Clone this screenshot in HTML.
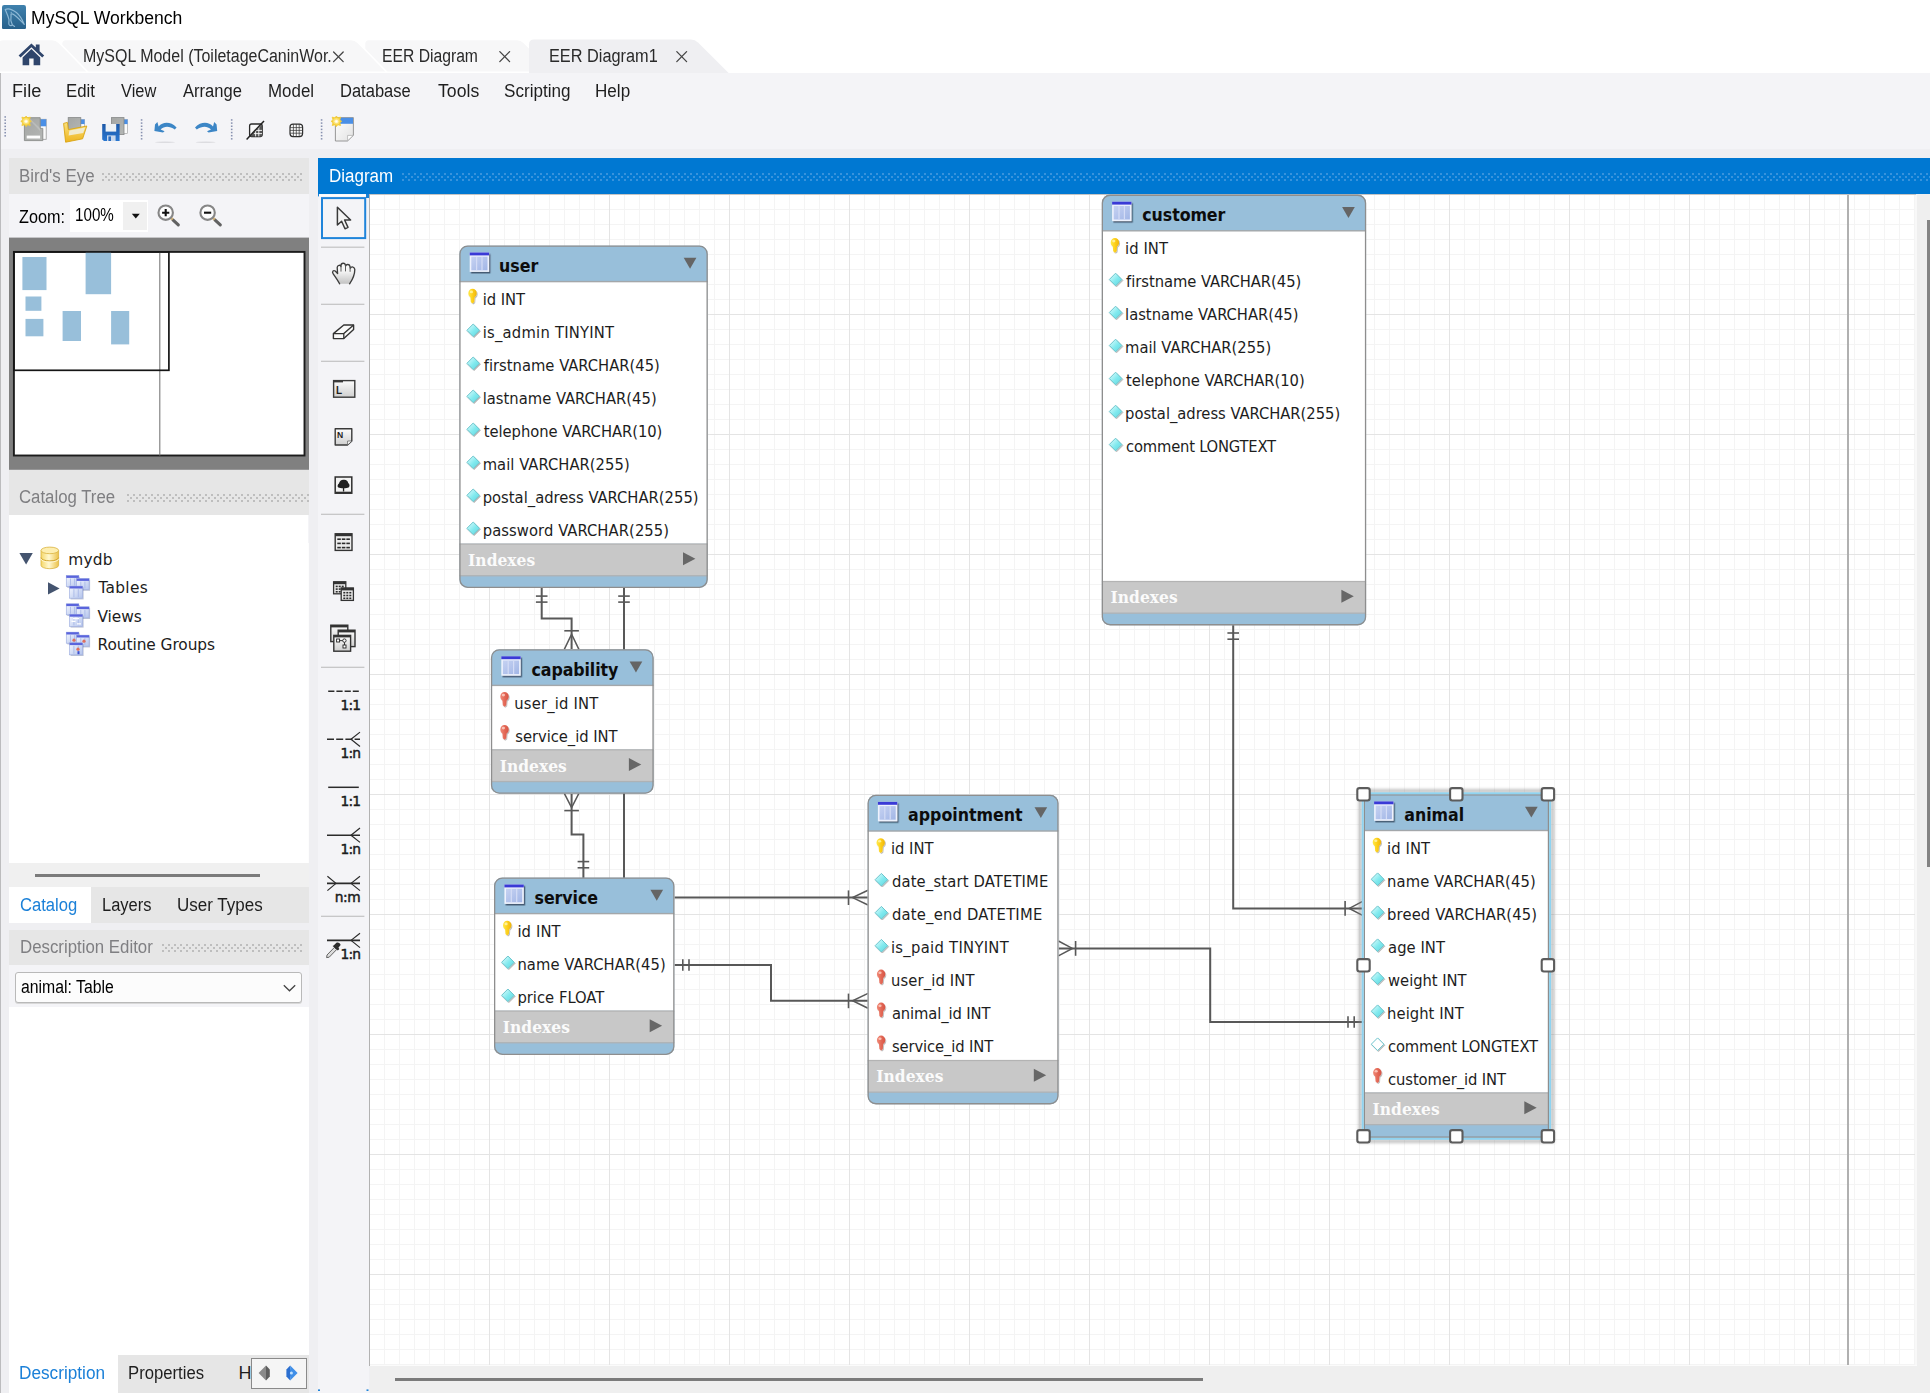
<!DOCTYPE html>
<html lang="en"><head><meta charset="utf-8"><title>MySQL Workbench</title><style>
html,body{margin:0;padding:0;background:#fff;}
body{width:1930px;height:1393px;position:relative;overflow:hidden;font-family:"Liberation Sans",sans-serif;}
body>div{position:absolute;}
.a{position:absolute;display:block;}
.t{position:absolute;white-space:nowrap;display:block;}
text{white-space:pre;}
</style></head>
<body>
<svg class="a" style="left:2px;top:4.5px" width="24" height="24.5" viewBox="0 0 24 24.5">
<defs><linearGradient id="tg" x1="0" y1="0" x2="0" y2="1"><stop offset="0" stop-color="#3f81ad"/><stop offset="1" stop-color="#27608a"/></linearGradient></defs>
<rect x="0" y="0" width="24" height="24.5" rx="2.2" fill="url(#tg)"/>
<path d="M3.2 4.5 C6 3 10.5 4.5 14.4 7.5 C18 10.5 20.5 15 22.3 19.5 C19.5 16.5 16 12.5 12.7 10.2 C11 9 9.8 8.6 9 9 C9.2 12 8.8 14 8.9 15.7 C9.2 17 10 18.6 10.5 20 C9.6 21 7.6 20.8 7 19.5 C6.4 17.5 7.2 16 7 14.6 C6.2 11 4.5 7.5 3.2 4.5 Z M10.5 20 L12.6 21.4" fill="none" stroke="#a5cbe4" stroke-width="1.15" stroke-linejoin="round" stroke-linecap="round" opacity=".8"/>
<circle cx="9.2" cy="7.4" r=".55" fill="#a5cbe4" opacity=".8"/>
</svg>
<span class="t" style="left:31.22px;top:6.80px;font:400 18px/23px 'Liberation Sans',sans-serif;letter-spacing:0.000px;color:#000;transform:scaleX(0.9758);transform-origin:0 0;">MySQL Workbench</span>
<svg class="a" style="left:0;top:38px" width="760" height="36" viewBox="0 38 760 36">
<path d="M364.5 72.3 V44 Q364.5 39.4 369 39.4 H517 Q521 39.4 524 42.4 L553 72.3 Z" fill="#f7f7f8" stroke="#fff" stroke-width="1.5"/>
<path d="M61.5 72.3 V44 Q61.5 39.4 66 39.4 H351 Q355 39.4 358 42.4 L387 72.3 Z" fill="#f7f7f8" stroke="#fff" stroke-width="1.5"/>
<path d="M-2 72.3 V44 Q-2 39.4 4 39.4 H52 Q56 39.4 59 42.4 L88 72.3 Z" fill="#f7f7f8" stroke="#fff" stroke-width="1.5"/>
<path d="M529 74 V44.5 Q529 39.4 534 39.4 H691 Q695 39.4 698 42.4 L729.6 74 Z" fill="#efeff2"/>
<g fill="#2f456b">
<path d="M31.4 43.4 L18.6 55.6 L20.6 57.6 L31.4 47.2 L42.2 57.6 L44.2 55.6 L39.6 51.2 V44.6 H35.8 V47.6 Z"/>
<path d="M31.4 49 L22.6 57.4 V65.2 H29.2 V58.4 H33.6 V65.2 H40.2 V57.4 Z"/>
</g>
<g stroke="#444" stroke-width="1.3" fill="none" stroke-linecap="round">
<path d="M333.6 52 L343.2 61.6 M343.2 52 L333.6 61.6"/>
<path d="M499.8 51.6 L509.6 61.6 M509.6 51.6 L499.8 61.6"/>
<path d="M676.8 51.6 L686.6 61.6 M686.6 51.6 L676.8 61.6"/>
</g>
</svg>
<span class="t" style="left:82.51px;top:45.00px;font:400 18px/23px 'Liberation Sans',sans-serif;letter-spacing:0.000px;color:#2a2a2a;transform:scaleX(0.8881);transform-origin:0 0;">MySQL Model (ToiletageCaninWor.</span>
<span class="t" style="left:382.43px;top:45.00px;font:400 18px/23px 'Liberation Sans',sans-serif;letter-spacing:0.000px;color:#2a2a2a;transform:scaleX(0.8719);transform-origin:0 0;">EER Diagram</span>
<span class="t" style="left:548.59px;top:45.00px;font:400 18px/23px 'Liberation Sans',sans-serif;letter-spacing:0.000px;color:#2a2a2a;transform:scaleX(0.9057);transform-origin:0 0;">EER Diagram1</span>
<div style="left:0px;top:73px;width:1930px;height:76px;background:#f4f4f7;"></div>
<div style="left:0px;top:149px;width:1930px;height:1244px;background:#efeff2;"></div>
<div style="left:0px;top:73px;width:1px;height:1320px;background:#bcbcbe;"></div>
<span class="t" style="left:11.99px;top:79.60px;font:400 18px/23px 'Liberation Sans',sans-serif;letter-spacing:0.000px;color:#1e1e1e;transform:scaleX(1.0110);transform-origin:0 0;">File</span>
<span class="t" style="left:66.27px;top:79.60px;font:400 18px/23px 'Liberation Sans',sans-serif;letter-spacing:0.000px;color:#1e1e1e;transform:scaleX(0.9328);transform-origin:0 0;">Edit</span>
<span class="t" style="left:121.30px;top:79.60px;font:400 18px/23px 'Liberation Sans',sans-serif;letter-spacing:0.000px;color:#1e1e1e;transform:scaleX(0.9121);transform-origin:0 0;">View</span>
<span class="t" style="left:182.60px;top:79.60px;font:400 18px/23px 'Liberation Sans',sans-serif;letter-spacing:0.000px;color:#1e1e1e;transform:scaleX(0.9199);transform-origin:0 0;">Arrange</span>
<span class="t" style="left:267.86px;top:79.60px;font:400 18px/23px 'Liberation Sans',sans-serif;letter-spacing:0.000px;color:#1e1e1e;transform:scaleX(0.9399);transform-origin:0 0;">Model</span>
<span class="t" style="left:340.28px;top:79.60px;font:400 18px/23px 'Liberation Sans',sans-serif;letter-spacing:0.000px;color:#1e1e1e;transform:scaleX(0.9179);transform-origin:0 0;">Database</span>
<span class="t" style="left:438.30px;top:79.60px;font:400 18px/23px 'Liberation Sans',sans-serif;letter-spacing:0.000px;color:#1e1e1e;transform:scaleX(0.9805);transform-origin:0 0;">Tools</span>
<span class="t" style="left:503.80px;top:79.60px;font:400 18px/23px 'Liberation Sans',sans-serif;letter-spacing:0.000px;color:#1e1e1e;transform:scaleX(0.9504);transform-origin:0 0;">Scripting</span>
<span class="t" style="left:594.85px;top:79.60px;font:400 18px/23px 'Liberation Sans',sans-serif;letter-spacing:0.000px;color:#1e1e1e;transform:scaleX(0.9498);transform-origin:0 0;">Help</span>
<svg class="a" style="left:0;top:108px" width="370" height="42" viewBox="0 108 370 42"><defs><linearGradient id="gdoc" x1="0" y1="0" x2="1" y2="1"><stop offset="0" stop-color="#a4a6a4"/><stop offset="1" stop-color="#b4b6b4"/></linearGradient><linearGradient id="gfold" x1="0" y1="0" x2="0" y2="1"><stop offset="0" stop-color="#fbe27f"/><stop offset="1" stop-color="#eeb51e"/></linearGradient><linearGradient id="gpage" x1="0" y1="0" x2="1" y2="1"><stop offset="0" stop-color="#ffffff"/><stop offset="1" stop-color="#e2e2e2"/></linearGradient><linearGradient id="gflop" x1="0" y1="0" x2="0" y2="1"><stop offset="0" stop-color="#1c58a8"/><stop offset="1" stop-color="#2a77d0"/></linearGradient></defs><rect x="4.4" y="116.20" width="1.6" height="1.5" fill="#8791b0"/><rect x="4.4" y="119.35" width="1.6" height="1.5" fill="#8791b0"/><rect x="4.4" y="122.50" width="1.6" height="1.5" fill="#8791b0"/><rect x="4.4" y="125.65" width="1.6" height="1.5" fill="#8791b0"/><rect x="4.4" y="128.80" width="1.6" height="1.5" fill="#8791b0"/><rect x="4.4" y="131.95" width="1.6" height="1.5" fill="#8791b0"/><rect x="4.4" y="135.10" width="1.6" height="1.5" fill="#8791b0"/><rect x="40" y="119.3" width="6.2" height="20" fill="#fbfbfb" stroke="#9a9a9a" stroke-width=".8"/><rect x="40" y="119.3" width="6.2" height="7" fill="#4a8fe6"/><path d="M24.4 117.7 H40.2 V128.4 H42.8 V140.6 H24.4 Z" fill="url(#gdoc)" stroke="#8a8c8a" stroke-width=".9"/><path d="M30 118.4 L40 128 V131 L28 118.4 Z" fill="#fff" opacity=".18"/><rect x="26.7" y="135.6" width="13.4" height="2.9" fill="#fdfdfd"/><polygon points="31.40,121.30 29.53,122.72 30.30,125.50 27.52,124.73 26.10,126.60 24.68,124.73 21.90,125.50 22.67,122.72 20.80,121.30 22.67,119.88 21.90,117.10 24.68,117.87 26.10,116.00 27.52,117.87 30.30,117.10 29.53,119.88" fill="#f6cf35" stroke="#f4cb3a" stroke-width=".8" stroke-linejoin="round"/><circle cx="26.1" cy="121.3" r="3.29" fill="#fbe06e"/><circle cx="26.1" cy="121.3" r="1.91" fill="#fff6c8"/><circle cx="26.1" cy="121.3" r="0.90" fill="#ffffff"/><rect x="80" y="119.5" width="4.6" height="9" fill="#fbfbfb" stroke="#9a9a9a" stroke-width=".6"/><rect x="80" y="119.5" width="4.6" height="4.6" fill="#4a8fe6"/><rect x="68.2" y="117.6" width="12.6" height="14" fill="url(#gdoc)" stroke="#868888" stroke-width=".8"/><path d="M63.6 123.4 L67.4 122.4 L68.4 129.6 L86.8 126 L82.6 138.8 L65.6 142.2 Z" fill="url(#gfold)" stroke="#d9a514" stroke-width=".9" stroke-linejoin="round"/><path d="M69.4 130.6 L85.2 127.4 L83.2 133 L68.6 135.6 Z" fill="#f1eedc" opacity=".9"/><rect x="123" y="119.5" width="4.6" height="14" fill="#fbfbfb" stroke="#9a9a9a" stroke-width=".6"/><rect x="123" y="119.5" width="4.6" height="4.6" fill="#4a8fe6"/><rect x="111.4" y="117.6" width="12.6" height="17" fill="url(#gdoc)" stroke="#868888" stroke-width=".8"/><path d="M102.2 124 H119.6 V141 H104 L102.2 139.4 Z" fill="url(#gflop)"/><rect x="105.6" y="124" width="10.6" height="7.6" fill="#eef2f6"/><rect x="107" y="135.4" width="8.6" height="5.6" fill="#c9d8ec"/><rect x="108.4" y="136.4" width="2.6" height="4.6" fill="#2a6cc0"/><rect x="140.8" y="119.20" width="1.6" height="1.5" fill="#8791b0"/><rect x="140.8" y="122.35" width="1.6" height="1.5" fill="#8791b0"/><rect x="140.8" y="125.50" width="1.6" height="1.5" fill="#8791b0"/><rect x="140.8" y="128.65" width="1.6" height="1.5" fill="#8791b0"/><rect x="140.8" y="131.80" width="1.6" height="1.5" fill="#8791b0"/><rect x="140.8" y="134.95" width="1.6" height="1.5" fill="#8791b0"/><rect x="140.8" y="138.10" width="1.6" height="1.5" fill="#8791b0"/><path d="M155 124.4 L157.4 122 L158.6 126.6 C163 121.6 170.4 121.4 176.6 127.4 L174.8 129.6 C169.6 126 164.4 126 160.6 129.4 L164.6 131.2 L163 132.4 L154.4 131 Z" fill="#3c86c6"/><ellipse cx="165" cy="142.2" rx="10" ry="0.7" fill="#dcdce0"/><path d="M216.6 124.4 L214.2 122 L213 126.6 C208.6 121.6 201.2 121.4 195 127.4 L196.8 129.6 C202 126 207.2 126 211 129.4 L207 131.2 L208.6 132.4 L217.2 131 Z" fill="#3c86c6"/><ellipse cx="205.6" cy="142.2" rx="10" ry="0.7" fill="#dcdce0"/><rect x="230.9" y="119.20" width="1.6" height="1.5" fill="#8791b0"/><rect x="230.9" y="122.35" width="1.6" height="1.5" fill="#8791b0"/><rect x="230.9" y="125.50" width="1.6" height="1.5" fill="#8791b0"/><rect x="230.9" y="128.65" width="1.6" height="1.5" fill="#8791b0"/><rect x="230.9" y="131.80" width="1.6" height="1.5" fill="#8791b0"/><rect x="230.9" y="134.95" width="1.6" height="1.5" fill="#8791b0"/><rect x="230.9" y="138.10" width="1.6" height="1.5" fill="#8791b0"/><rect x="249.6" y="124" width="12.6" height="12.6" rx="2" fill="#fafafa" stroke="#2a2a2a" stroke-width="1.3"/><path d="M262 124.4 L262 136.4 L250 136.4 Z" fill="#555"/><path d="M254 130.4 H262 M254 133.6 H262 M255.6 128 V136.4 M258.8 126 V136.4" stroke="#fafafa" stroke-width=".9"/><path d="M246.6 139.4 L264 121" stroke="#222" stroke-width="1.5"/><rect x="290" y="124.2" width="12.6" height="12.4" rx="3" fill="#fafafa" stroke="#2e2e2e" stroke-width="1.2"/><path d="M290 127.6 H302.6 M290 130.4 H302.6 M290 133.2 H302.6 M293.4 124 V136.6 M296.3 124 V136.6 M299.2 124 V136.6" stroke="#3a3a3a" stroke-width=".75"/><rect x="320.8" y="119.20" width="1.6" height="1.5" fill="#8791b0"/><rect x="320.8" y="122.35" width="1.6" height="1.5" fill="#8791b0"/><rect x="320.8" y="125.50" width="1.6" height="1.5" fill="#8791b0"/><rect x="320.8" y="128.65" width="1.6" height="1.5" fill="#8791b0"/><rect x="320.8" y="131.80" width="1.6" height="1.5" fill="#8791b0"/><rect x="320.8" y="134.95" width="1.6" height="1.5" fill="#8791b0"/><rect x="320.8" y="138.10" width="1.6" height="1.5" fill="#8791b0"/><path d="M335.4 117.6 H353.4 V135.4 L347.4 141 H335.4 Z" fill="url(#gpage)" stroke="#8c8c8c" stroke-width=".9"/><rect x="336" y="117.8" width="17" height="6" fill="#4a8fe6"/><path d="M353.2 135.4 H347.6 V140.8 Z" fill="#fff" stroke="#aaa" stroke-width=".7"/><polygon points="341.70,121.30 339.83,122.72 340.60,125.50 337.82,124.73 336.40,126.60 334.98,124.73 332.20,125.50 332.97,122.72 331.10,121.30 332.97,119.88 332.20,117.10 334.98,117.87 336.40,116.00 337.82,117.87 340.60,117.10 339.83,119.88" fill="#f6cf35" stroke="#f4cb3a" stroke-width=".8" stroke-linejoin="round"/><circle cx="336.4" cy="121.3" r="3.29" fill="#fbe06e"/><circle cx="336.4" cy="121.3" r="1.91" fill="#fff6c8"/><circle cx="336.4" cy="121.3" r="0.90" fill="#ffffff"/></svg>
<div style="left:9px;top:158px;width:300px;height:36px;background:#e6e6e6;"></div>
<span class="t" style="left:19.26px;top:164.90px;font:400 18px/23px 'Liberation Sans',sans-serif;letter-spacing:0.000px;color:#7f7f82;transform:scaleX(0.9389);transform-origin:0 0;">Bird's Eye</span>
<svg class="a" style="left:102px;top:173px" width="200" height="8" viewBox="0 0 200 8" shape-rendering="crispEdges"><defs><pattern id="d1" width="6" height="6" patternUnits="userSpaceOnUse"><rect x="0" y="0" width="2" height="2" fill="#bebebe"/><rect x="3" y="3" width="2" height="2" fill="#bebebe"/></pattern></defs><rect x="0" y="0" width="200" height="8" fill="url(#d1)"/></svg>
<div style="left:9px;top:194px;width:300px;height:44px;background:#f4f4f7;"></div>
<span class="t" style="left:19.00px;top:205.50px;font:400 18px/23px 'Liberation Sans',sans-serif;letter-spacing:0.000px;color:#000;transform:scaleX(0.8998);transform-origin:0 0;">Zoom:</span>
<div style="left:70px;top:200.4px;width:78px;height:31.400000000000006px;background:#fff;"></div>
<div style="left:123px;top:202px;width:24px;height:28px;background:#f0f0f0;"></div>
<span class="t" style="left:75.10px;top:202.30px;font:400 19px/25px 'Liberation Sans',sans-serif;letter-spacing:0.000px;color:#000;transform:scaleX(0.7987);transform-origin:0 0;">100%</span>
<svg class="a" style="left:128px;top:200px" width="100" height="32" viewBox="128 200 100 32">
<path d="M131.8 213.8 H139.8 L135.8 218.6 Z" fill="#111"/>
<g fill="none">
<path d="M172.9 219.8 L178.3 224.9" stroke="#626262" stroke-width="3.1" stroke-linecap="round"/>
<path d="M171 218 L172.7 219.6" stroke="#d6b67a" stroke-width="2.8"/>
<circle cx="165.7" cy="212.7" r="7.2" stroke="#868686" stroke-width="2.1" fill="#fdfdfd"/>
<path d="M162.1 212.7 H169.3 M165.7 209.1 V216.3" stroke="#111" stroke-width="2.1"/>
<path d="M214.9 219.8 L220.3 224.9" stroke="#626262" stroke-width="3.1" stroke-linecap="round"/>
<path d="M213 218 L214.7 219.6" stroke="#d6b67a" stroke-width="2.8"/>
<circle cx="207.6" cy="212.7" r="7.2" stroke="#868686" stroke-width="2.1" fill="#fdfdfd"/>
<path d="M204 212.7 H211.2" stroke="#111" stroke-width="2.1"/>
</g></svg>
<svg class="a" style="left:0;top:236px" width="312" height="236" viewBox="0 236 312 236"><rect x="9" y="237.6" width="300" height="232.2" fill="#808080"/><rect x="13.9" y="251.9" width="290.6" height="203.6" fill="#fff" stroke="#1c1c1c" stroke-width="1.9"/><rect x="22.4" y="257" width="24.1" height="33.1" fill="#98bfda"/><rect x="85.6" y="251.2" width="25.5" height="43.0" fill="#98bfda"/><rect x="25.5" y="296.5" width="15.9" height="14.3" fill="#98bfda"/><rect x="25.5" y="318.9" width="17.9" height="17.4" fill="#98bfda"/><rect x="62.6" y="311" width="18.4" height="30.0" fill="#98bfda"/><rect x="111.1" y="311" width="18.1" height="33.4" fill="#98bfda"/><path d="M159.8 252.5 V455.5" stroke="#7a7a7a" stroke-width="1.1" fill="none"/><rect x="13.9" y="251.9" width="155" height="118.4" fill="none" stroke="#151515" stroke-width="1.7"/></svg>
<div style="left:9px;top:469.8px;width:300px;height:45.19999999999999px;background:#e6e6e6;"></div>
<span class="t" style="left:19.40px;top:485.90px;font:400 18px/23px 'Liberation Sans',sans-serif;letter-spacing:0.000px;color:#7f7f82;transform:scaleX(0.9325);transform-origin:0 0;">Catalog Tree</span>
<svg class="a" style="left:127px;top:494px" width="182" height="8" viewBox="0 0 182 8" shape-rendering="crispEdges"><defs><pattern id="d2" width="6" height="6" patternUnits="userSpaceOnUse"><rect x="0" y="0" width="2" height="2" fill="#bebebe"/><rect x="3" y="3" width="2" height="2" fill="#bebebe"/></pattern></defs><rect x="0" y="0" width="182" height="8" fill="url(#d2)"/></svg>
<div style="left:9px;top:515px;width:298.5px;height:348px;background:#fff;"></div>
<div style="left:307.5px;top:515px;width:1.5px;height:28px;background:#f4f4f7;"></div>
<div style="left:307.5px;top:543px;width:1.5px;height:320px;background:#fdfdfd;"></div>
<svg class="a" style="left:0;top:540px" width="100" height="120" viewBox="0 540 100 120"><defs><linearGradient id="gdb" x1="0" y1="0" x2="1" y2="0"><stop offset="0" stop-color="#f5d86a"/><stop offset=".45" stop-color="#fff8d0"/><stop offset="1" stop-color="#ecc24a"/></linearGradient><linearGradient id="gtb" x1="0" y1="0" x2="1" y2="1"><stop offset="0" stop-color="#f4f7ff"/><stop offset="1" stop-color="#b4c4ec"/></linearGradient></defs><path d="M19.4 553 H32.8 L26.1 564.6 Z" fill="#44546f"/><path d="M48 582.2 L59.6 588.4 L48 594.6 Z" fill="#44546f"/><g stroke="#d9b240" stroke-width=".8"><path d="M41 550.4 V565.4 A8.8 3.3 0 0 0 58.6 565.4 V550.4 Z" fill="url(#gdb)"/><path d="M41 557.6 A8.8 3.3 0 0 0 58.6 557.6" fill="none" stroke="#cfa22a" stroke-width="1"/><path d="M41 558.8 A8.8 3.3 0 0 0 58.6 558.8" fill="none" stroke="#fff8d8" stroke-width=".9"/><ellipse cx="49.8" cy="550.4" rx="8.8" ry="3.3" fill="#fdeeb0"/></g><rect x="67.3" y="576.8000000000001" width="12.5" height="11" fill="#5a6a98" opacity=".4"/><rect x="66.3" y="575.6" width="12.5" height="11" fill="url(#gtb)" stroke="#a3b2e2" stroke-width=".7"/><rect x="66.3" y="575.6" width="12.5" height="2.3" fill="#5a64dc"/><path d="M70.5 578.6 V585.6 M74.6 578.6 V585.6" stroke="#a9b9e8" stroke-width=".9"/><rect x="77.6" y="579.8000000000001" width="12.5" height="11" fill="#5a6a98" opacity=".4"/><rect x="76.6" y="578.6" width="12.5" height="11" fill="url(#gtb)" stroke="#a3b2e2" stroke-width=".7"/><rect x="76.6" y="578.6" width="12.5" height="2.3" fill="#5a64dc"/><path d="M80.8 581.6 V588.6 M84.9 581.6 V588.6" stroke="#a9b9e8" stroke-width=".9"/><rect x="70.6" y="587.4000000000001" width="13" height="12" fill="#5a6a98" opacity=".4"/><rect x="69.6" y="586.2" width="13" height="12" fill="url(#gtb)" stroke="#a3b2e2" stroke-width=".7"/><rect x="69.6" y="586.2" width="13" height="2.3" fill="#5a64dc"/><path d="M73.9 589.2 V597.2 M78.3 589.2 V597.2" stroke="#a9b9e8" stroke-width=".9"/><rect x="67.3" y="605.0" width="12.5" height="11" fill="#5a6a98" opacity=".4"/><rect x="66.3" y="603.8" width="12.5" height="11" fill="url(#gtb)" stroke="#a3b2e2" stroke-width=".7"/><rect x="66.3" y="603.8" width="12.5" height="2.3" fill="#5a64dc"/><path d="M70.5 606.8 V613.8 M74.6 606.8 V613.8" stroke="#a9b9e8" stroke-width=".9"/><rect x="77.6" y="608.0" width="12.5" height="11" fill="#5a6a98" opacity=".4"/><rect x="76.6" y="606.8" width="12.5" height="11" fill="url(#gtb)" stroke="#a3b2e2" stroke-width=".7"/><rect x="76.6" y="606.8" width="12.5" height="2.3" fill="#5a64dc"/><path d="M80.8 609.8 V616.8 M84.9 609.8 V616.8" stroke="#a9b9e8" stroke-width=".9"/><rect x="70.6" y="615.6" width="13" height="12" fill="#5a6a98" opacity=".4"/><rect x="69.6" y="614.4" width="13" height="12" fill="url(#gtb)" stroke="#a3b2e2" stroke-width=".7"/><rect x="69.6" y="614.4" width="13" height="2.3" fill="#5a64dc"/><path d="M73.9 617.4 V625.4 M78.3 617.4 V625.4" stroke="#a9b9e8" stroke-width=".9"/><path d="M71.5 621.3 h4 m1.5 2.5 h4 m-8 -5.2 h6" stroke="#fff" stroke-width="1.2"/><rect x="67.3" y="633.4000000000001" width="12.5" height="11" fill="#5a6a98" opacity=".4"/><rect x="66.3" y="632.2" width="12.5" height="11" fill="url(#gtb)" stroke="#a3b2e2" stroke-width=".7"/><rect x="66.3" y="632.2" width="12.5" height="2.3" fill="#5a64dc"/><path d="M70.5 635.2 V642.2 M74.6 635.2 V642.2" stroke="#a9b9e8" stroke-width=".9"/><rect x="77.6" y="636.4000000000001" width="12.5" height="11" fill="#5a6a98" opacity=".4"/><rect x="76.6" y="635.2" width="12.5" height="11" fill="url(#gtb)" stroke="#a3b2e2" stroke-width=".7"/><rect x="76.6" y="635.2" width="12.5" height="2.3" fill="#5a64dc"/><path d="M80.8 638.2 V645.2 M84.9 638.2 V645.2" stroke="#a9b9e8" stroke-width=".9"/><rect x="70.6" y="644.0000000000001" width="13" height="12" fill="#5a6a98" opacity=".4"/><rect x="69.6" y="642.8000000000001" width="13" height="12" fill="url(#gtb)" stroke="#a3b2e2" stroke-width=".7"/><rect x="69.6" y="642.8000000000001" width="13" height="2.3" fill="#5a64dc"/><path d="M73.9 645.8000000000001 V653.8000000000001 M78.3 645.8000000000001 V653.8000000000001" stroke="#a9b9e8" stroke-width=".9"/><circle cx="74" cy="640.2" r="1.6" fill="#e0705e"/><circle cx="84" cy="641.2" r="1.6" fill="#e0705e"/><circle cx="78" cy="649.2" r="1.6" fill="#e0705e"/><rect x="77.5" y="651.2" width="2" height="3" fill="#3a4fd0"/></svg>
<span class="t" style="left:68.30px;top:549.60px;font:400 15.4px/20px 'DejaVu Sans',sans-serif;letter-spacing:0.177px;color:#1c1c1c;">mydb</span>
<span class="t" style="left:98.40px;top:578.40px;font:400 15.4px/20px 'DejaVu Sans',sans-serif;letter-spacing:0.300px;color:#1c1c1c;">Tables</span>
<span class="t" style="left:97.40px;top:606.80px;font:400 15.4px/20px 'DejaVu Sans',sans-serif;letter-spacing:-0.056px;color:#1c1c1c;">Views</span>
<span class="t" style="left:97.60px;top:635.20px;font:400 15.4px/20px 'DejaVu Sans',sans-serif;letter-spacing:-0.081px;color:#1c1c1c;">Routine Groups</span>
<div style="left:9px;top:863px;width:300px;height:24.399999999999977px;background:#f0f0f0;"></div>
<div style="left:34.5px;top:873.7px;width:225.2px;height:3.199999999999932px;background:#7b7b7b;"></div>
<div style="left:9px;top:887.4px;width:300px;height:35.80000000000007px;background:#e6e6e6;"></div>
<div style="left:9px;top:887.4px;width:82.3px;height:35.80000000000007px;background:#fff;"></div>
<span class="t" style="left:20.40px;top:894.00px;font:400 18px/23px 'Liberation Sans',sans-serif;letter-spacing:0.000px;color:#1b80d8;transform:scaleX(0.9225);transform-origin:0 0;">Catalog</span>
<span class="t" style="left:102.48px;top:894.00px;font:400 18px/23px 'Liberation Sans',sans-serif;letter-spacing:0.000px;color:#1e1e1e;transform:scaleX(0.9165);transform-origin:0 0;">Layers</span>
<span class="t" style="left:177.06px;top:894.00px;font:400 18px/23px 'Liberation Sans',sans-serif;letter-spacing:0.000px;color:#1e1e1e;transform:scaleX(0.9441);transform-origin:0 0;">User Types</span>
<div style="left:9px;top:929.6px;width:300px;height:35.39999999999998px;background:#e6e6e6;"></div>
<span class="t" style="left:19.66px;top:935.90px;font:400 18px/23px 'Liberation Sans',sans-serif;letter-spacing:0.000px;color:#7f7f82;transform:scaleX(0.9350);transform-origin:0 0;">Description Editor</span>
<svg class="a" style="left:162px;top:944px" width="140" height="8" viewBox="0 0 140 8" shape-rendering="crispEdges"><defs><pattern id="d3" width="6" height="6" patternUnits="userSpaceOnUse"><rect x="0" y="0" width="2" height="2" fill="#bebebe"/><rect x="3" y="3" width="2" height="2" fill="#bebebe"/></pattern></defs><rect x="0" y="0" width="140" height="8" fill="url(#d3)"/></svg>
<div style="left:9px;top:965px;width:300px;height:42px;background:#f4f4f7;"></div>
<div style="left:15.1px;top:971.5px;width:287.4px;height:31.200000000000045px;background:#fcfcfc;border:1px solid #b9b9b9;border-radius:3px;box-sizing:border-box;box-shadow:0 1px 0 #d8d8d8"></div>
<span class="t" style="left:21.00px;top:976.40px;font:400 18px/23px 'Liberation Sans',sans-serif;letter-spacing:0.000px;color:#000;transform:scaleX(0.8770);transform-origin:0 0;">animal: Table</span>
<svg class="a" style="left:280px;top:980px" width="20" height="16" viewBox="280 980 20 16"><path d="M283.8 985.2 L289.5 990.8 L295.2 985.2" fill="none" stroke="#444" stroke-width="1.3"/></svg>
<div style="left:9px;top:1007px;width:300px;height:348px;background:#fff;"></div>
<div style="left:9px;top:1355px;width:300px;height:38px;background:#e6e6e6;"></div>
<div style="left:9px;top:1355px;width:109px;height:38px;background:#fff;"></div>
<span class="t" style="left:19.44px;top:1362.40px;font:400 18px/23px 'Liberation Sans',sans-serif;letter-spacing:0.000px;color:#1b80d8;transform:scaleX(0.9554);transform-origin:0 0;">Description</span>
<span class="t" style="left:128.47px;top:1362.40px;font:400 18px/23px 'Liberation Sans',sans-serif;letter-spacing:0.000px;color:#1e1e1e;transform:scaleX(0.9267);transform-origin:0 0;">Properties</span>
<span class="t" style="left:238.60px;top:1362.40px;font:400 18px/23px 'Liberation Sans',sans-serif;letter-spacing:0.000px;color:#1e1e1e;">H</span>
<div style="left:251px;top:1357.6px;width:56px;height:31.800000000000182px;background:#f5f5f5;border:1px solid #8a8a8a;box-sizing:border-box"></div>
<svg class="a" style="left:252px;top:1360px" width="54" height="28" viewBox="252 1360 54 28">
<path d="M258.6 1373 L266 1365.6 V1369.4 L269.6 1373 L266 1376.6 V1380.4 Z" fill="#8a8a8a"/><path d="M266 1365.6 V1380.4 L269.8 1376.6 V1369.4 Z" fill="#5e5e5e"/>
<path d="M297.6 1373 L290.2 1365.6 V1369.4 L286.6 1373 L290.2 1376.6 V1380.4 Z" fill="#3f8fe8"/><path d="M290.2 1365.6 V1380.4 L286.4 1376.6 V1369.4 Z" fill="#2b6fd0"/><circle cx="291.4" cy="1373" r="1.5" fill="#bfe0ff"/>
</svg>
<div style="left:318px;top:158px;width:1612px;height:36px;background:#0078d2;"></div>
<span class="t" style="left:328.66px;top:164.90px;font:400 18px/23px 'Liberation Sans',sans-serif;letter-spacing:0.000px;color:#fff;transform:scaleX(0.9421);transform-origin:0 0;">Diagram</span>
<svg class="a" style="left:402px;top:173px" width="1528" height="8" viewBox="0 0 1528 8" shape-rendering="crispEdges"><defs><pattern id="d4" width="6" height="6" patternUnits="userSpaceOnUse"><rect x="0" y="0" width="2" height="2" fill="#3893dc"/><rect x="3" y="3" width="2" height="2" fill="#3893dc"/></pattern></defs><rect x="0" y="0" width="1528" height="8" fill="url(#d4)"/></svg>
<div style="left:318px;top:194px;width:51px;height:1199px;background:#f4f4f7;"></div>
<div style="left:369px;top:194px;width:1px;height:1172px;background:#b2b2b2;"></div>
<div style="left:370px;top:194px;width:1546px;height:1px;background:#c4c4c4;"></div>
<div style="left:370px;top:195px;width:1545px;height:1171px;background:#fff;background-image:linear-gradient(to right,#e4e4e4 1px,transparent 1px),linear-gradient(to bottom,#e4e4e4 1px,transparent 1px),linear-gradient(to right,#f4f4f4 1px,transparent 1px),linear-gradient(to bottom,#f4f4f4 1px,transparent 1px);background-size:120px 120px,120px 120px,15px 15px,15px 15px;background-position:119px 0,0 119px,14px 0,0 14px;"></div>
<div style="left:1847px;top:195px;width:2px;height:1170px;background:#b0b0b0;"></div>
<div style="left:1915px;top:195px;width:2px;height:1171px;background:#f8f8f8;"></div>
<div style="left:1917px;top:194px;width:13px;height:1172px;background:#efefef;"></div>
<div style="left:1927.3px;top:219.8px;width:2.7000000000000455px;height:647.7px;background:#838383;"></div>
<div style="left:370px;top:1366px;width:1560px;height:27px;background:#efefef;"></div>
<div style="left:370px;top:1365px;width:1547px;height:1px;background:#fbfbfb;"></div>
<div style="left:394.6px;top:1377.7px;width:808.4px;height:3.099999999999909px;background:#7b7b7b;"></div>
<svg class="a" style="left:318px;top:194px" width="52" height="1199" viewBox="318 194 52 1199"><rect x="319" y="194.6" width="47" height="1.6" rx=".8" fill="#fdfdfe"/><rect x="366" y="194" width="3" height="4" fill="#1b80d4"/><rect x="318" y="194" width="1" height="2.4" fill="#1b80d4"/><rect x="322" y="198.1" width="43.2" height="40" fill="#f4f4f7" stroke="#1f84da" stroke-width="2"/><rect x="321" y="246.6" width="43.4" height="1.2" fill="#c2c2c2"/><rect x="321" y="303.7" width="43.4" height="1.2" fill="#c2c2c2"/><rect x="321" y="360.7" width="43.4" height="1.2" fill="#c2c2c2"/><rect x="321" y="513.6999999999999" width="43.4" height="1.2" fill="#c2c2c2"/><rect x="321" y="666.6999999999999" width="43.4" height="1.2" fill="#c2c2c2"/><rect x="321" y="915.6999999999999" width="43.4" height="1.2" fill="#c2c2c2"/><defs><linearGradient id="gic" x1="0" y1="0" x2="0" y2="1"><stop offset="0" stop-color="#fdfdfd"/><stop offset="1" stop-color="#cfcfcf"/></linearGradient><linearGradient id="ghand" x1="0" y1="0" x2="0" y2="1"><stop offset="0" stop-color="#ffffff"/><stop offset=".45" stop-color="#f0f0f0"/><stop offset="1" stop-color="#c2c2c2"/></linearGradient></defs><path d="M337.4 207.2 L337.4 225 L341.6 221.2 L345 228.8 L348 227.4 L344.6 220 L350.6 220 Z" fill="#f4f4f4" stroke="#3a3a3a" stroke-width="1.5" stroke-linejoin="round"/><path d="M339.6 283.8 C338 280.6 336.2 278 333.2 273.8 C331.6 271.8 333.4 269.8 335.2 271 L337.6 273.6 L337.2 267.6 C337.2 264.8 340.6 264.6 341 266.6 L341 265.4 C341.2 262.6 345 262.6 345.4 265.2 L345.6 266.2 C346.2 263.8 349.8 264 350 266.6 L350.4 268.2 C351.4 266 354.8 266.8 354.8 269.6 C354.8 274.6 352.6 279.6 349.6 283.8 Z" fill="url(#ghand)" stroke="none"/><path d="M339.6 283.8 C338 280.6 336.2 278 333.2 273.8 C331.6 271.8 333.4 269.8 335.2 271 L337.6 273.6 L337.2 267.6 C337.2 264.8 340.6 264.6 341 266.6 L341 265.4 C341.2 262.6 345 262.6 345.4 265.2 L345.6 266.2 C346.2 263.8 349.8 264 350 266.6 L350.4 268.2 C351.4 266 354.8 266.8 354.8 269.6 C354.8 274.6 352.6 279.6 349.6 283.8" fill="none" stroke="#3c3c3c" stroke-width="1.35" stroke-linejoin="round" stroke-linecap="round"/><path d="M341 266.8 V271.2 M345.5 265.8 V271 M350.1 267.2 V271.4" stroke="#5a5a5a" stroke-width="1" stroke-linecap="round" fill="none"/><path d="M333.4 333.6 L343.8 325 L353.6 325 L353.6 329.4 L343.8 338.6 L333.4 338.6 Z" fill="#fafafa" stroke="#333" stroke-width="1.4" stroke-linejoin="round"/><path d="M333.4 333.6 H343.8 L353.6 325 M343.8 333.6 V338.6" fill="none" stroke="#333" stroke-width="1.3"/><rect x="333.6" y="380.6" width="21.2" height="16.6" fill="url(#gic)" stroke="#3a3a3a" stroke-width="1.4"/><rect x="333.6" y="380.4" width="9.4" height="2" fill="#3a3a3a"/><text x="336" y="393.9" font-family="'Liberation Sans',sans-serif" font-size="10" font-weight="700" fill="#1e1e1e">L</text><path d="M335.2 428.8 H351.8 V441 L347.4 445 H335.2 Z" fill="url(#gic)" stroke="#3a3a3a" stroke-width="1.4" stroke-linejoin="round"/><path d="M351.6 441 H347.6 V444.8" fill="#fff" stroke="#666" stroke-width=".8"/><text x="337" y="438.3" font-family="'Liberation Sans',sans-serif" font-size="8.6" font-weight="700" fill="#1e1e1e">N</text><rect x="335.2" y="477" width="16.6" height="16.2" fill="#f2f2f2" stroke="#2e2e2e" stroke-width="1.5"/><path d="M343.6 479.8 C346 479.4 348 481 348.2 483 C349.8 484 350 486.6 348.6 487.6 C347 488.6 340 488.6 338.4 487.6 C337 486.6 337.6 484 339 483.4 C339.4 481.4 341.4 479.6 343.6 479.8 Z M342.9 488 H344.2 V491.6 H342.9 Z" fill="#1e1e1e"/><path d="M336 492.4 H351" stroke="#2e2e2e" stroke-width="1.4"/><rect x="335.2" y="533.8" width="16.8" height="16.6" fill="#ededed" stroke="#333" stroke-width="1.4"/><rect x="335.2" y="533.5999999999999" width="16.8" height="2.6" fill="#333"/><rect x="337.30" y="538.40" width="3.53" height="1.6" fill="#2c2c2c"/><rect x="341.83" y="538.40" width="3.53" height="1.6" fill="#2c2c2c"/><rect x="346.37" y="538.40" width="3.53" height="1.6" fill="#2c2c2c"/><rect x="337.30" y="542.60" width="3.53" height="1.6" fill="#2c2c2c"/><rect x="341.83" y="542.60" width="3.53" height="1.6" fill="#2c2c2c"/><rect x="346.37" y="542.60" width="3.53" height="1.6" fill="#2c2c2c"/><rect x="337.30" y="546.80" width="3.53" height="1.6" fill="#2c2c2c"/><rect x="341.83" y="546.80" width="3.53" height="1.6" fill="#2c2c2c"/><rect x="346.37" y="546.80" width="3.53" height="1.6" fill="#2c2c2c"/><rect x="333.6" y="581.8" width="12.2" height="12" fill="#ededed" stroke="#333" stroke-width="1.3"/><rect x="333.6" y="581.5999999999999" width="12.2" height="2.6" fill="#333"/><rect x="335.70" y="585.63" width="2.00" height="1.6" fill="#2c2c2c"/><rect x="338.70" y="585.63" width="2.00" height="1.6" fill="#2c2c2c"/><rect x="341.70" y="585.63" width="2.00" height="1.6" fill="#2c2c2c"/><rect x="335.70" y="588.30" width="2.00" height="1.6" fill="#2c2c2c"/><rect x="338.70" y="588.30" width="2.00" height="1.6" fill="#2c2c2c"/><rect x="341.70" y="588.30" width="2.00" height="1.6" fill="#2c2c2c"/><rect x="335.70" y="590.97" width="2.00" height="1.6" fill="#2c2c2c"/><rect x="338.70" y="590.97" width="2.00" height="1.6" fill="#2c2c2c"/><rect x="341.70" y="590.97" width="2.00" height="1.6" fill="#2c2c2c"/><rect x="341.2" y="588" width="12.2" height="12.4" fill="#ededed" stroke="#333" stroke-width="1.3"/><rect x="341.2" y="587.8" width="12.2" height="2.6" fill="#333"/><rect x="343.30" y="591.90" width="2.00" height="1.6" fill="#2c2c2c"/><rect x="346.30" y="591.90" width="2.00" height="1.6" fill="#2c2c2c"/><rect x="349.30" y="591.90" width="2.00" height="1.6" fill="#2c2c2c"/><rect x="343.30" y="594.70" width="2.00" height="1.6" fill="#2c2c2c"/><rect x="346.30" y="594.70" width="2.00" height="1.6" fill="#2c2c2c"/><rect x="349.30" y="594.70" width="2.00" height="1.6" fill="#2c2c2c"/><rect x="343.30" y="597.50" width="2.00" height="1.6" fill="#2c2c2c"/><rect x="346.30" y="597.50" width="2.00" height="1.6" fill="#2c2c2c"/><rect x="349.30" y="597.50" width="2.00" height="1.6" fill="#2c2c2c"/><rect x="330.8" y="625.2" width="17" height="16.4" fill="url(#gic)" stroke="#333" stroke-width="1.4"/><rect x="330.8" y="625" width="17" height="2.4" fill="#333"/><rect x="338.2" y="630.2" width="16.8" height="16.4" fill="url(#gic)" stroke="#333" stroke-width="1.4"/><rect x="338.2" y="630" width="16.8" height="2.4" fill="#333"/><rect x="333.8" y="635.4" width="16.8" height="15.8" fill="url(#gic)" stroke="#333" stroke-width="1.4"/><rect x="333.8" y="635.2" width="16.8" height="2.2" fill="#333"/><rect x="336.6" y="639" width="3" height="3" fill="#fff" stroke="#222" stroke-width=".9"/><circle cx="344.4" cy="640.6" r="1.7" fill="#fff" stroke="#222" stroke-width=".9"/><rect x="343" y="645" width="3" height="3" fill="#fff" stroke="#222" stroke-width=".9"/><path d="M339.8 640.6 H342.6 M344.5 642.4 V645" stroke="#222" stroke-width=".9"/><path d="M328.2 691.3 H358.8" stroke="#2b2b2b" stroke-width="1.5" stroke-dasharray="6.2 2"/><path d="M327 739.3 H360" stroke="#2b2b2b" stroke-width="1.5" stroke-dasharray="7 2.2"/><path d="M351 739.3 L360 732.0999999999999 M351 739.3 L360 746.5" stroke="#2b2b2b" stroke-width="1.2" fill="none"/><path d="M328.2 787.3 H358.8" stroke="#2b2b2b" stroke-width="1.5"/><path d="M327 835.2 H360" stroke="#2b2b2b" stroke-width="1.6"/><path d="M351 835.2 L360 828.0 M351 835.2 L360 842.4000000000001" stroke="#2b2b2b" stroke-width="1.2" fill="none"/><path d="M327 883.4 H360" stroke="#2b2b2b" stroke-width="1.6"/><path d="M351 883.4 L360 876.1999999999999 M351 883.4 L360 890.6" stroke="#2b2b2b" stroke-width="1.2" fill="none"/><path d="M336 883.4 L327.4 876.2 M336 883.4 L327.4 890.6" stroke="#2b2b2b" stroke-width="1.2" fill="none"/><path d="M327 940.4 H360" stroke="#2b2b2b" stroke-width="1.6"/><path d="M351 940.4 L360 933.1999999999999 M351 940.4 L360 947.6" stroke="#2b2b2b" stroke-width="1.2" fill="none"/><path d="M326.6 957.6 L327 955 L334.4 947.4 L336.6 949.6 L329.2 957.2 Z" fill="#dcdcdc" stroke="#555" stroke-width=".9"/><path d="M333.6 945.4 L336.2 943 C337.6 941.8 340.4 943 340.6 945 L338.4 947.8 L339.4 949 L337.8 950.6 L332.6 946 Z" fill="#2c2c2c"/><text x="340.60" y="710.00" font-family="'DejaVu Sans',sans-serif" font-size="13.8" font-weight="400" fill="#1c1c1c" style="letter-spacing:-0.913px;stroke:#1c1c1c;stroke-width:.45px;">1:1</text><text x="340.60" y="757.60" font-family="'DejaVu Sans',sans-serif" font-size="13.8" font-weight="400" fill="#1c1c1c" style="letter-spacing:-0.913px;stroke:#1c1c1c;stroke-width:.45px;">1:n</text><text x="340.60" y="805.60" font-family="'DejaVu Sans',sans-serif" font-size="13.8" font-weight="400" fill="#1c1c1c" style="letter-spacing:-0.913px;stroke:#1c1c1c;stroke-width:.45px;">1:1</text><text x="340.60" y="853.90" font-family="'DejaVu Sans',sans-serif" font-size="13.8" font-weight="400" fill="#1c1c1c" style="letter-spacing:-0.913px;stroke:#1c1c1c;stroke-width:.45px;">1:n</text><text x="334.80" y="902.00" font-family="'DejaVu Sans',sans-serif" font-size="13.8" font-weight="400" fill="#1c1c1c" style="letter-spacing:-0.496px;stroke:#1c1c1c;stroke-width:.45px;">n:m</text><text x="340.60" y="958.80" font-family="'DejaVu Sans',sans-serif" font-size="13.8" font-weight="400" fill="#1c1c1c" style="letter-spacing:-0.913px;stroke:#1c1c1c;stroke-width:.45px;">1:n</text><rect x="318" y="1389.4" width="2" height="1.6" fill="#1f84da"/><rect x="366.5" y="1389.4" width="2" height="1.6" fill="#1f84da"/></svg>
<svg class="a" style="left:370px;top:194px;overflow:hidden" width="1545" height="1172" viewBox="370 194 1545 1172"><defs>
<linearGradient id="gti" x1="0" y1="0" x2="1" y2="1"><stop offset="0" stop-color="#c6d2f2"/><stop offset="1" stop-color="#a2b6e6"/></linearGradient>
<linearGradient id="gdm" x1="0" y1="0" x2="1" y2="1"><stop offset="0" stop-color="#e9ffff"/><stop offset=".55" stop-color="#7fe9ee"/><stop offset="1" stop-color="#63d4dc"/></linearGradient>
<linearGradient id="gky" x1="0" y1="0" x2="1" y2="0"><stop offset="0" stop-color="#ffe94a"/><stop offset=".5" stop-color="#fdd01c"/><stop offset="1" stop-color="#f0b40c"/></linearGradient>
<linearGradient id="gkr" x1="0" y1="0" x2="1" y2="0"><stop offset="0" stop-color="#f08a78"/><stop offset=".5" stop-color="#e46a58"/><stop offset="1" stop-color="#d65444"/></linearGradient>
<filter id="sh" x="-30%" y="-30%" width="180%" height="180%"><feDropShadow dx="1.3" dy="1.5" stdDeviation=".7" flood-color="#1a2a40" flood-opacity=".7"/></filter>
<filter id="sh2" x="-30%" y="-30%" width="180%" height="180%"><feDropShadow dx=".8" dy="1" stdDeviation=".7" flood-color="#000" flood-opacity=".3"/></filter>
<filter id="glow" x="-10%" y="-10%" width="120%" height="120%"><feGaussianBlur stdDeviation="1.6"/></filter>
</defs><path d="M541.7 588 V618.5 H571.6 V649" fill="none" stroke="#585858" stroke-width="2.0" stroke-linejoin="miter"/><path d="M535.9000000000001 596.1 H547.5" stroke="#585858" stroke-width="1.6"/><path d="M535.9000000000001 602.1 H547.5" stroke="#585858" stroke-width="1.6"/><path d="M564.3 630.8 H578.9" stroke="#585858" stroke-width="1.6"/><path d="M564.3 649.4 L571.6 634.2 L578.9 649.4" fill="none" stroke="#585858" stroke-width="1.5"/><path d="M624 588 V878" fill="none" stroke="#585858" stroke-width="2.0" stroke-linejoin="miter"/><path d="M618.2 596.1 H629.8" stroke="#585858" stroke-width="1.6"/><path d="M618.2 602.1 H629.8" stroke="#585858" stroke-width="1.6"/><path d="M571.6 794 V834.6 H583.4 V878" fill="none" stroke="#585858" stroke-width="2.0" stroke-linejoin="miter"/><path d="M564.3 810.6 H578.9" stroke="#585858" stroke-width="1.6"/><path d="M564.3 793.4 L571.6 807.6 L578.9 793.4" fill="none" stroke="#585858" stroke-width="1.5"/><path d="M577.6 861.6 H589.1999999999999" stroke="#585858" stroke-width="1.6"/><path d="M577.6 867.8 H589.1999999999999" stroke="#585858" stroke-width="1.6"/><path d="M674.5 897.6 H868" fill="none" stroke="#585858" stroke-width="2.0" stroke-linejoin="miter"/><path d="M848.5 890.4 V905" stroke="#585858" stroke-width="1.6"/><path d="M868 890.2 L852.6 897.6 L868 905" fill="none" stroke="#585858" stroke-width="1.5"/><path d="M674.5 965 H771 V1000.8 H868" fill="none" stroke="#585858" stroke-width="2.0" stroke-linejoin="miter"/><path d="M682.8 959.2 V970.8" stroke="#585858" stroke-width="1.6"/><path d="M689 959.2 V970.8" stroke="#585858" stroke-width="1.6"/><path d="M848.5 993.6 V1008.2" stroke="#585858" stroke-width="1.6"/><path d="M868 993.4 L852.6 1000.8 L868 1008.2" fill="none" stroke="#585858" stroke-width="1.5"/><path d="M1058.6 948.4 H1210.2 V1022 H1363.5" fill="none" stroke="#585858" stroke-width="2.0" stroke-linejoin="miter"/><path d="M1075.6 941 V955.8" stroke="#585858" stroke-width="1.6"/><path d="M1058.4 941 L1072.4 948.4 L1058.4 955.8" fill="none" stroke="#585858" stroke-width="1.5"/><path d="M1348 1016.2 V1027.8" stroke="#585858" stroke-width="1.6"/><path d="M1354.2 1016.2 V1027.8" stroke="#585858" stroke-width="1.6"/><path d="M1233.2 625 V908.4 H1363.5" fill="none" stroke="#585858" stroke-width="2.0" stroke-linejoin="miter"/><path d="M1227.4 633 H1239.0" stroke="#585858" stroke-width="1.6"/><path d="M1227.4 639.2 H1239.0" stroke="#585858" stroke-width="1.6"/><path d="M1345.1 901 V915.8" stroke="#585858" stroke-width="1.6"/><path d="M1362.6 901.4 L1349.2 908.4 L1362.6 915.4" fill="none" stroke="#585858" stroke-width="1.5"/><clipPath id="cuser"><rect x="459.3" y="245.4" width="248.49999999999994" height="342.6" rx="8.5"/></clipPath><g clip-path="url(#cuser)"><rect x="459.3" y="245.4" width="248.49999999999994" height="342.6" fill="#98bfda"/><rect x="459.3" y="281.7" width="248.49999999999994" height="262" fill="#fff"/><rect x="459.3" y="543.7" width="248.49999999999994" height="32" fill="#c8c8c8"/><rect x="459.3" y="280.9" width="248.49999999999994" height="1.4" fill="#a3a7aa"/><rect x="459.3" y="543.5" width="248.49999999999994" height="1.2" fill="#b3b3b3"/><rect x="459.3" y="575.1" width="248.49999999999994" height="1.3" fill="#aeb2b5"/></g><rect x="459.95" y="246.05" width="247.19999999999993" height="341.3" rx="7.85" fill="none" stroke="#8e8e8e" stroke-width="1.3"/><g filter="url(#sh)"><rect x="469.7" y="252.5" width="19.4" height="19.4" fill="#eef2fd"/></g><rect x="471.3" y="256.7" width="16.2" height="13.6" fill="url(#gti)"/><rect x="469.7" y="252.5" width="19.4" height="2.9" fill="#3a3ad6"/><path d="M476.6 256.9 V270.1 M482.0 256.9 V270.1" stroke="#d4dcf6" stroke-width="1.2"/><text x="498.90" y="271.80" font-family="'DejaVu Sans Condensed','DejaVu Sans',sans-serif" font-size="17.6" font-weight="700" fill="#0c0c0c" style="letter-spacing:0.056px;font-stretch:condensed;">user</text><path d="M683.7 257.8 H696.4 L690.05 268.7 Z" fill="#656565"/><g filter="url(#sh2)"><path d="M468.30 293.20 a4.2 4.4 0 1 1 8.4 0 c0 1.9 -0.9 3.2 -2.1 4 l-0.4 4.9 l-1.7 1.5 l-1.7 -1.5 l-0.4 -4.9 c-1.2 -0.8 -2.1 -2.1 -2.1 -4 Z" fill="url(#gky)"/><ellipse cx="471.40" cy="291.90" rx="1.6" ry="1.3" fill="#fff6b0" opacity=".8"/></g><text x="482.70" y="305.00" font-family="'DejaVu Sans Condensed','DejaVu Sans',sans-serif" font-size="16.4" font-weight="400" fill="#1d1d1d" style="letter-spacing:-0.024px;font-stretch:condensed;">id INT</text><g filter="url(#sh2)"><path d="M466.90 330.30 L473.20 324.00 L479.50 330.30 L473.20 336.60 Z" fill="url(#gdm)" stroke="#6cc4cc" stroke-width="1"/></g><text x="482.70" y="338.00" font-family="'DejaVu Sans Condensed','DejaVu Sans',sans-serif" font-size="16.4" font-weight="400" fill="#1d1d1d" style="letter-spacing:0.240px;font-stretch:condensed;">is_admin TINYINT</text><g filter="url(#sh2)"><path d="M466.90 363.30 L473.20 357.00 L479.50 363.30 L473.20 369.60 Z" fill="url(#gdm)" stroke="#6cc4cc" stroke-width="1"/></g><text x="483.70" y="371.00" font-family="'DejaVu Sans Condensed','DejaVu Sans',sans-serif" font-size="16.4" font-weight="400" fill="#1d1d1d" style="letter-spacing:0.015px;font-stretch:condensed;">firstname VARCHAR(45)</text><g filter="url(#sh2)"><path d="M466.90 396.30 L473.20 390.00 L479.50 396.30 L473.20 402.60 Z" fill="url(#gdm)" stroke="#6cc4cc" stroke-width="1"/></g><text x="482.70" y="404.00" font-family="'DejaVu Sans Condensed','DejaVu Sans',sans-serif" font-size="16.4" font-weight="400" fill="#1d1d1d" style="letter-spacing:0.017px;font-stretch:condensed;">lastname VARCHAR(45)</text><g filter="url(#sh2)"><path d="M466.90 429.30 L473.20 423.00 L479.50 429.30 L473.20 435.60 Z" fill="url(#gdm)" stroke="#6cc4cc" stroke-width="1"/></g><text x="483.70" y="437.00" font-family="'DejaVu Sans Condensed','DejaVu Sans',sans-serif" font-size="16.4" font-weight="400" fill="#1d1d1d" style="letter-spacing:-0.037px;font-stretch:condensed;">telephone VARCHAR(10)</text><g filter="url(#sh2)"><path d="M466.90 462.30 L473.20 456.00 L479.50 462.30 L473.20 468.60 Z" fill="url(#gdm)" stroke="#6cc4cc" stroke-width="1"/></g><text x="482.70" y="470.00" font-family="'DejaVu Sans Condensed','DejaVu Sans',sans-serif" font-size="16.4" font-weight="400" fill="#1d1d1d" style="letter-spacing:0.048px;font-stretch:condensed;">mail VARCHAR(255)</text><g filter="url(#sh2)"><path d="M466.90 495.30 L473.20 489.00 L479.50 495.30 L473.20 501.60 Z" fill="url(#gdm)" stroke="#6cc4cc" stroke-width="1"/></g><text x="482.70" y="503.00" font-family="'DejaVu Sans Condensed','DejaVu Sans',sans-serif" font-size="16.4" font-weight="400" fill="#1d1d1d" style="letter-spacing:0.015px;font-stretch:condensed;">postal_adress VARCHAR(255)</text><g filter="url(#sh2)"><path d="M466.90 528.30 L473.20 522.00 L479.50 528.30 L473.20 534.60 Z" fill="url(#gdm)" stroke="#6cc4cc" stroke-width="1"/></g><text x="482.70" y="536.00" font-family="'DejaVu Sans Condensed','DejaVu Sans',sans-serif" font-size="16.4" font-weight="400" fill="#1d1d1d" style="letter-spacing:0.089px;font-stretch:condensed;">password VARCHAR(255)</text><text x="468.10" y="565.90" font-family="'DejaVu Serif Condensed','DejaVu Serif',serif" font-size="17.2" font-weight="700" fill="#fbfbfb" style="letter-spacing:0.037px;font-stretch:condensed;">Indexes</text><path d="M683.0 552.3000000000001 L695.4 558.8000000000001 L683.0 565.3000000000001 Z" fill="#676767"/><clipPath id="ccustomer"><rect x="1101.7" y="194.6" width="264.5" height="430.79999999999984" rx="8.5"/></clipPath><g clip-path="url(#ccustomer)"><rect x="1101.7" y="194.6" width="264.5" height="430.79999999999984" fill="#98bfda"/><rect x="1101.7" y="230.89999999999998" width="264.5" height="350.2" fill="#fff"/><rect x="1101.7" y="581.0999999999999" width="264.5" height="32" fill="#c8c8c8"/><rect x="1101.7" y="230.09999999999997" width="264.5" height="1.4" fill="#a3a7aa"/><rect x="1101.7" y="580.8999999999999" width="264.5" height="1.2" fill="#b3b3b3"/><rect x="1101.7" y="612.4999999999999" width="264.5" height="1.3" fill="#aeb2b5"/></g><rect x="1102.3500000000001" y="195.25" width="263.2" height="429.49999999999983" rx="7.85" fill="none" stroke="#8e8e8e" stroke-width="1.3"/><g filter="url(#sh)"><rect x="1112.1000000000001" y="201.7" width="19.4" height="19.4" fill="#eef2fd"/></g><rect x="1113.7" y="205.89999999999998" width="16.2" height="13.6" fill="url(#gti)"/><rect x="1112.1000000000001" y="201.7" width="19.4" height="2.9" fill="#3a3ad6"/><path d="M1119.0 206.1 V219.29999999999998 M1124.4 206.1 V219.29999999999998" stroke="#d4dcf6" stroke-width="1.2"/><text x="1142.30" y="221.00" font-family="'DejaVu Sans Condensed','DejaVu Sans',sans-serif" font-size="17.6" font-weight="700" fill="#0c0c0c" style="letter-spacing:-0.079px;font-stretch:condensed;">customer</text><path d="M1342.1 207.0 H1354.8 L1348.45 217.9 Z" fill="#656565"/><g filter="url(#sh2)"><path d="M1110.70 242.40 a4.2 4.4 0 1 1 8.4 0 c0 1.9 -0.9 3.2 -2.1 4 l-0.4 4.9 l-1.7 1.5 l-1.7 -1.5 l-0.4 -4.9 c-1.2 -0.8 -2.1 -2.1 -2.1 -4 Z" fill="url(#gky)"/><ellipse cx="1113.80" cy="241.10" rx="1.6" ry="1.3" fill="#fff6b0" opacity=".8"/></g><text x="1125.10" y="254.20" font-family="'DejaVu Sans Condensed','DejaVu Sans',sans-serif" font-size="16.4" font-weight="400" fill="#1d1d1d" style="letter-spacing:0.056px;font-stretch:condensed;">id INT</text><g filter="url(#sh2)"><path d="M1109.30 279.50 L1115.60 273.20 L1121.90 279.50 L1115.60 285.80 Z" fill="url(#gdm)" stroke="#6cc4cc" stroke-width="1"/></g><text x="1126.10" y="287.20" font-family="'DejaVu Sans Condensed','DejaVu Sans',sans-serif" font-size="16.4" font-weight="400" fill="#1d1d1d" style="letter-spacing:-0.035px;font-stretch:condensed;">firstname VARCHAR(45)</text><g filter="url(#sh2)"><path d="M1109.30 312.50 L1115.60 306.20 L1121.90 312.50 L1115.60 318.80 Z" fill="url(#gdm)" stroke="#6cc4cc" stroke-width="1"/></g><text x="1125.10" y="320.20" font-family="'DejaVu Sans Condensed','DejaVu Sans',sans-serif" font-size="16.4" font-weight="400" fill="#1d1d1d" style="letter-spacing:-0.015px;font-stretch:condensed;">lastname VARCHAR(45)</text><g filter="url(#sh2)"><path d="M1109.30 345.50 L1115.60 339.20 L1121.90 345.50 L1115.60 351.80 Z" fill="url(#gdm)" stroke="#6cc4cc" stroke-width="1"/></g><text x="1125.10" y="353.20" font-family="'DejaVu Sans Condensed','DejaVu Sans',sans-serif" font-size="16.4" font-weight="400" fill="#1d1d1d" style="letter-spacing:-0.002px;font-stretch:condensed;">mail VARCHAR(255)</text><g filter="url(#sh2)"><path d="M1109.30 378.50 L1115.60 372.20 L1121.90 378.50 L1115.60 384.80 Z" fill="url(#gdm)" stroke="#6cc4cc" stroke-width="1"/></g><text x="1126.10" y="386.20" font-family="'DejaVu Sans Condensed','DejaVu Sans',sans-serif" font-size="16.4" font-weight="400" fill="#1d1d1d" style="letter-spacing:-0.042px;font-stretch:condensed;">telephone VARCHAR(10)</text><g filter="url(#sh2)"><path d="M1109.30 411.50 L1115.60 405.20 L1121.90 411.50 L1115.60 417.80 Z" fill="url(#gdm)" stroke="#6cc4cc" stroke-width="1"/></g><text x="1125.10" y="419.20" font-family="'DejaVu Sans Condensed','DejaVu Sans',sans-serif" font-size="16.4" font-weight="400" fill="#1d1d1d" style="letter-spacing:-0.017px;font-stretch:condensed;">postal_adress VARCHAR(255)</text><g filter="url(#sh2)"><path d="M1109.30 444.50 L1115.60 438.20 L1121.90 444.50 L1115.60 450.80 Z" fill="url(#gdm)" stroke="#6cc4cc" stroke-width="1"/></g><text x="1126.10" y="452.20" font-family="'DejaVu Sans Condensed','DejaVu Sans',sans-serif" font-size="16.4" font-weight="400" fill="#1d1d1d" style="letter-spacing:-0.205px;font-stretch:condensed;">comment LONGTEXT</text><text x="1110.50" y="603.30" font-family="'DejaVu Serif Condensed','DejaVu Serif',serif" font-size="17.2" font-weight="700" fill="#fbfbfb" style="letter-spacing:0.037px;font-stretch:condensed;">Indexes</text><path d="M1341.4 589.6999999999999 L1353.8 596.1999999999999 L1341.4 602.6999999999999 Z" fill="#676767"/><clipPath id="ccapability"><rect x="490.9" y="649.2" width="162.80000000000007" height="144.5999999999999" rx="8.5"/></clipPath><g clip-path="url(#ccapability)"><rect x="490.9" y="649.2" width="162.80000000000007" height="144.5999999999999" fill="#98bfda"/><rect x="490.9" y="685.5" width="162.80000000000007" height="64" fill="#fff"/><rect x="490.9" y="749.5" width="162.80000000000007" height="32" fill="#c8c8c8"/><rect x="490.9" y="684.7" width="162.80000000000007" height="1.4" fill="#a3a7aa"/><rect x="490.9" y="749.3" width="162.80000000000007" height="1.2" fill="#b3b3b3"/><rect x="490.9" y="780.9" width="162.80000000000007" height="1.3" fill="#aeb2b5"/></g><rect x="491.54999999999995" y="649.85" width="161.50000000000006" height="143.2999999999999" rx="7.85" fill="none" stroke="#8e8e8e" stroke-width="1.3"/><g filter="url(#sh)"><rect x="501.29999999999995" y="656.3000000000001" width="19.4" height="19.4" fill="#eef2fd"/></g><rect x="502.9" y="660.5000000000001" width="16.2" height="13.6" fill="url(#gti)"/><rect x="501.29999999999995" y="656.3000000000001" width="19.4" height="2.9" fill="#3a3ad6"/><path d="M508.2 660.7 V673.9000000000001 M513.6 660.7 V673.9000000000001" stroke="#d4dcf6" stroke-width="1.2"/><text x="531.50" y="675.60" font-family="'DejaVu Sans Condensed','DejaVu Sans',sans-serif" font-size="17.6" font-weight="700" fill="#0c0c0c" style="letter-spacing:-0.081px;font-stretch:condensed;">capability</text><path d="M629.6 661.6 H642.3 L635.95 672.5 Z" fill="#656565"/><g filter="url(#sh2)"><path d="M500.30 696.40 a4.2 4.4 0 1 1 8.4 0 c0 1.9 -0.9 3.2 -2.1 4 l-0.4 4.9 l-1.7 1.5 l-1.7 -1.5 l-0.4 -4.9 c-1.2 -0.8 -2.1 -2.1 -2.1 -4 Z" fill="url(#gkr)"/><ellipse cx="503.40" cy="695.10" rx="1.6" ry="1.3" fill="#ffd6cc" opacity=".8"/></g><text x="514.30" y="708.80" font-family="'DejaVu Sans Condensed','DejaVu Sans',sans-serif" font-size="16.4" font-weight="400" fill="#1d1d1d" style="letter-spacing:0.185px;font-stretch:condensed;">user_id INT</text><g filter="url(#sh2)"><path d="M500.30 729.40 a4.2 4.4 0 1 1 8.4 0 c0 1.9 -0.9 3.2 -2.1 4 l-0.4 4.9 l-1.7 1.5 l-1.7 -1.5 l-0.4 -4.9 c-1.2 -0.8 -2.1 -2.1 -2.1 -4 Z" fill="url(#gkr)"/><ellipse cx="503.40" cy="728.10" rx="1.6" ry="1.3" fill="#ffd6cc" opacity=".8"/></g><text x="515.30" y="741.80" font-family="'DejaVu Sans Condensed','DejaVu Sans',sans-serif" font-size="16.4" font-weight="400" fill="#1d1d1d" style="letter-spacing:-0.039px;font-stretch:condensed;">service_id INT</text><text x="499.70" y="771.70" font-family="'DejaVu Serif Condensed','DejaVu Serif',serif" font-size="17.2" font-weight="700" fill="#fbfbfb" style="letter-spacing:0.037px;font-stretch:condensed;">Indexes</text><path d="M628.9 758.1 L641.3 764.6 L628.9 771.1 Z" fill="#676767"/><clipPath id="cservice"><rect x="494" y="877.4" width="180.5" height="177.5999999999998" rx="8.5"/></clipPath><g clip-path="url(#cservice)"><rect x="494" y="877.4" width="180.5" height="177.5999999999998" fill="#98bfda"/><rect x="494" y="913.6999999999999" width="180.5" height="97" fill="#fff"/><rect x="494" y="1010.6999999999999" width="180.5" height="32" fill="#c8c8c8"/><rect x="494" y="912.9" width="180.5" height="1.4" fill="#a3a7aa"/><rect x="494" y="1010.4999999999999" width="180.5" height="1.2" fill="#b3b3b3"/><rect x="494" y="1042.1" width="180.5" height="1.3" fill="#aeb2b5"/></g><rect x="494.65" y="878.05" width="179.2" height="176.29999999999978" rx="7.85" fill="none" stroke="#8e8e8e" stroke-width="1.3"/><g filter="url(#sh)"><rect x="504.4" y="884.5" width="19.4" height="19.4" fill="#eef2fd"/></g><rect x="506.0" y="888.7" width="16.2" height="13.6" fill="url(#gti)"/><rect x="504.4" y="884.5" width="19.4" height="2.9" fill="#3a3ad6"/><path d="M511.3 888.9 V902.1 M516.7 888.9 V902.1" stroke="#d4dcf6" stroke-width="1.2"/><text x="534.60" y="903.80" font-family="'DejaVu Sans Condensed','DejaVu Sans',sans-serif" font-size="17.6" font-weight="700" fill="#0c0c0c" style="letter-spacing:-0.082px;font-stretch:condensed;">service</text><path d="M650.4 889.8 H663.1 L656.75 900.6999999999999 Z" fill="#656565"/><g filter="url(#sh2)"><path d="M503.00 925.20 a4.2 4.4 0 1 1 8.4 0 c0 1.9 -0.9 3.2 -2.1 4 l-0.4 4.9 l-1.7 1.5 l-1.7 -1.5 l-0.4 -4.9 c-1.2 -0.8 -2.1 -2.1 -2.1 -4 Z" fill="url(#gky)"/><ellipse cx="506.10" cy="923.90" rx="1.6" ry="1.3" fill="#fff6b0" opacity=".8"/></g><text x="517.40" y="937.00" font-family="'DejaVu Sans Condensed','DejaVu Sans',sans-serif" font-size="16.4" font-weight="400" fill="#1d1d1d" style="letter-spacing:0.136px;font-stretch:condensed;">id INT</text><g filter="url(#sh2)"><path d="M501.60 962.30 L507.90 956.00 L514.20 962.30 L507.90 968.60 Z" fill="url(#gdm)" stroke="#6cc4cc" stroke-width="1"/></g><text x="517.40" y="970.00" font-family="'DejaVu Sans Condensed','DejaVu Sans',sans-serif" font-size="16.4" font-weight="400" fill="#1d1d1d" style="letter-spacing:0.087px;font-stretch:condensed;">name VARCHAR(45)</text><g filter="url(#sh2)"><path d="M501.60 995.30 L507.90 989.00 L514.20 995.30 L507.90 1001.60 Z" fill="url(#gdm)" stroke="#6cc4cc" stroke-width="1"/></g><text x="517.40" y="1003.00" font-family="'DejaVu Sans Condensed','DejaVu Sans',sans-serif" font-size="16.4" font-weight="400" fill="#1d1d1d" style="letter-spacing:0.018px;font-stretch:condensed;">price FLOAT</text><text x="502.80" y="1032.90" font-family="'DejaVu Serif Condensed','DejaVu Serif',serif" font-size="17.2" font-weight="700" fill="#fbfbfb" style="letter-spacing:0.037px;font-stretch:condensed;">Indexes</text><path d="M649.7 1019.3 L662.1 1025.8 L649.7 1032.3 Z" fill="#676767"/><clipPath id="cappointment"><rect x="867.5" y="794.8" width="191.0999999999999" height="309.5999999999999" rx="8.5"/></clipPath><g clip-path="url(#cappointment)"><rect x="867.5" y="794.8" width="191.0999999999999" height="309.5999999999999" fill="#98bfda"/><rect x="867.5" y="831.0999999999999" width="191.0999999999999" height="229" fill="#fff"/><rect x="867.5" y="1060.1" width="191.0999999999999" height="32" fill="#c8c8c8"/><rect x="867.5" y="830.3" width="191.0999999999999" height="1.4" fill="#a3a7aa"/><rect x="867.5" y="1059.8999999999999" width="191.0999999999999" height="1.2" fill="#b3b3b3"/><rect x="867.5" y="1091.5" width="191.0999999999999" height="1.3" fill="#aeb2b5"/></g><rect x="868.15" y="795.4499999999999" width="189.7999999999999" height="308.2999999999999" rx="7.85" fill="none" stroke="#8e8e8e" stroke-width="1.3"/><g filter="url(#sh)"><rect x="877.9" y="801.9" width="19.4" height="19.4" fill="#eef2fd"/></g><rect x="879.5" y="806.1" width="16.2" height="13.6" fill="url(#gti)"/><rect x="877.9" y="801.9" width="19.4" height="2.9" fill="#3a3ad6"/><path d="M884.8 806.3 V819.5 M890.2 806.3 V819.5" stroke="#d4dcf6" stroke-width="1.2"/><text x="908.10" y="821.20" font-family="'DejaVu Sans Condensed','DejaVu Sans',sans-serif" font-size="17.6" font-weight="700" fill="#0c0c0c" style="letter-spacing:-0.008px;font-stretch:condensed;">appointment</text><path d="M1034.5 807.1999999999999 H1047.2 L1040.85 818.0999999999999 Z" fill="#656565"/><g filter="url(#sh2)"><path d="M876.50 842.60 a4.2 4.4 0 1 1 8.4 0 c0 1.9 -0.9 3.2 -2.1 4 l-0.4 4.9 l-1.7 1.5 l-1.7 -1.5 l-0.4 -4.9 c-1.2 -0.8 -2.1 -2.1 -2.1 -4 Z" fill="url(#gky)"/><ellipse cx="879.60" cy="841.30" rx="1.6" ry="1.3" fill="#fff6b0" opacity=".8"/></g><text x="890.90" y="854.40" font-family="'DejaVu Sans Condensed','DejaVu Sans',sans-serif" font-size="16.4" font-weight="400" fill="#1d1d1d" style="letter-spacing:0.016px;font-stretch:condensed;">id INT</text><g filter="url(#sh2)"><path d="M875.10 879.70 L881.40 873.40 L887.70 879.70 L881.40 886.00 Z" fill="url(#gdm)" stroke="#6cc4cc" stroke-width="1"/></g><text x="891.90" y="887.40" font-family="'DejaVu Sans Condensed','DejaVu Sans',sans-serif" font-size="16.4" font-weight="400" fill="#1d1d1d" style="letter-spacing:0.177px;font-stretch:condensed;">date_start DATETIME</text><g filter="url(#sh2)"><path d="M875.10 912.70 L881.40 906.40 L887.70 912.70 L881.40 919.00 Z" fill="url(#gdm)" stroke="#6cc4cc" stroke-width="1"/></g><text x="891.90" y="920.40" font-family="'DejaVu Sans Condensed','DejaVu Sans',sans-serif" font-size="16.4" font-weight="400" fill="#1d1d1d" style="letter-spacing:0.227px;font-stretch:condensed;">date_end DATETIME</text><g filter="url(#sh2)"><path d="M875.10 945.70 L881.40 939.40 L887.70 945.70 L881.40 952.00 Z" fill="url(#gdm)" stroke="#6cc4cc" stroke-width="1"/></g><text x="890.90" y="953.40" font-family="'DejaVu Sans Condensed','DejaVu Sans',sans-serif" font-size="16.4" font-weight="400" fill="#1d1d1d" style="letter-spacing:0.311px;font-stretch:condensed;">is_paid TINYINT</text><g filter="url(#sh2)"><path d="M876.90 974.00 a4.2 4.4 0 1 1 8.4 0 c0 1.9 -0.9 3.2 -2.1 4 l-0.4 4.9 l-1.7 1.5 l-1.7 -1.5 l-0.4 -4.9 c-1.2 -0.8 -2.1 -2.1 -2.1 -4 Z" fill="url(#gkr)"/><ellipse cx="880.00" cy="972.70" rx="1.6" ry="1.3" fill="#ffd6cc" opacity=".8"/></g><text x="890.90" y="986.40" font-family="'DejaVu Sans Condensed','DejaVu Sans',sans-serif" font-size="16.4" font-weight="400" fill="#1d1d1d" style="letter-spacing:0.155px;font-stretch:condensed;">user_id INT</text><g filter="url(#sh2)"><path d="M876.90 1007.00 a4.2 4.4 0 1 1 8.4 0 c0 1.9 -0.9 3.2 -2.1 4 l-0.4 4.9 l-1.7 1.5 l-1.7 -1.5 l-0.4 -4.9 c-1.2 -0.8 -2.1 -2.1 -2.1 -4 Z" fill="url(#gkr)"/><ellipse cx="880.00" cy="1005.70" rx="1.6" ry="1.3" fill="#ffd6cc" opacity=".8"/></g><text x="891.90" y="1019.40" font-family="'DejaVu Sans Condensed','DejaVu Sans',sans-serif" font-size="16.4" font-weight="400" fill="#1d1d1d" style="letter-spacing:-0.114px;font-stretch:condensed;">animal_id INT</text><g filter="url(#sh2)"><path d="M876.90 1040.00 a4.2 4.4 0 1 1 8.4 0 c0 1.9 -0.9 3.2 -2.1 4 l-0.4 4.9 l-1.7 1.5 l-1.7 -1.5 l-0.4 -4.9 c-1.2 -0.8 -2.1 -2.1 -2.1 -4 Z" fill="url(#gkr)"/><ellipse cx="880.00" cy="1038.70" rx="1.6" ry="1.3" fill="#ffd6cc" opacity=".8"/></g><text x="891.90" y="1052.40" font-family="'DejaVu Sans Condensed','DejaVu Sans',sans-serif" font-size="16.4" font-weight="400" fill="#1d1d1d" style="letter-spacing:-0.101px;font-stretch:condensed;">service_id INT</text><text x="876.30" y="1082.30" font-family="'DejaVu Serif Condensed','DejaVu Serif',serif" font-size="17.2" font-weight="700" fill="#fbfbfb" style="letter-spacing:0.037px;font-stretch:condensed;">Indexes</text><path d="M1033.8 1068.6999999999998 L1046.2 1075.1999999999998 L1033.8 1081.6999999999998 Z" fill="#676767"/><rect x="1360.3" y="790.9" width="192.19999999999987" height="350.3" fill="none" stroke="#808080" stroke-width="3.6" opacity=".48" filter="url(#glow)"/><clipPath id="canimal"><rect x="1363.7" y="794.3" width="185.39999999999986" height="343.5" rx="1.5"/></clipPath><g clip-path="url(#canimal)"><rect x="1363.7" y="794.3" width="185.39999999999986" height="343.5" fill="#98bfda"/><rect x="1363.7" y="830.5999999999999" width="185.39999999999986" height="262" fill="#fff"/><rect x="1363.7" y="1092.6" width="185.39999999999986" height="32" fill="#c8c8c8"/><rect x="1363.7" y="829.8" width="185.39999999999986" height="1.4" fill="#a3a7aa"/><rect x="1363.7" y="1092.3999999999999" width="185.39999999999986" height="1.2" fill="#b3b3b3"/><rect x="1363.7" y="1124.0" width="185.39999999999986" height="1.3" fill="#aeb2b5"/></g><rect x="1364.3500000000001" y="794.9499999999999" width="184.09999999999985" height="342.2" rx="0.85" fill="none" stroke="#8e8e8e" stroke-width="1.3"/><rect x="1362.7" y="793.3" width="187.39999999999986" height="345.5" fill="none" stroke="#8fd3f0" stroke-width="2"/><g filter="url(#sh)"><rect x="1374.1000000000001" y="801.4" width="19.4" height="19.4" fill="#eef2fd"/></g><rect x="1375.7" y="805.6" width="16.2" height="13.6" fill="url(#gti)"/><rect x="1374.1000000000001" y="801.4" width="19.4" height="2.9" fill="#3a3ad6"/><path d="M1381.0 805.8 V819.0 M1386.4 805.8 V819.0" stroke="#d4dcf6" stroke-width="1.2"/><text x="1404.30" y="820.70" font-family="'DejaVu Sans Condensed','DejaVu Sans',sans-serif" font-size="17.6" font-weight="700" fill="#0c0c0c" style="letter-spacing:-0.028px;font-stretch:condensed;">animal</text><path d="M1525.0 806.6999999999999 H1537.7 L1531.35 817.5999999999999 Z" fill="#656565"/><g filter="url(#sh2)"><path d="M1372.70 842.10 a4.2 4.4 0 1 1 8.4 0 c0 1.9 -0.9 3.2 -2.1 4 l-0.4 4.9 l-1.7 1.5 l-1.7 -1.5 l-0.4 -4.9 c-1.2 -0.8 -2.1 -2.1 -2.1 -4 Z" fill="url(#gky)"/><ellipse cx="1375.80" cy="840.80" rx="1.6" ry="1.3" fill="#fff6b0" opacity=".8"/></g><text x="1387.10" y="853.90" font-family="'DejaVu Sans Condensed','DejaVu Sans',sans-serif" font-size="16.4" font-weight="400" fill="#1d1d1d" style="letter-spacing:0.096px;font-stretch:condensed;">id INT</text><g filter="url(#sh2)"><path d="M1371.30 879.20 L1377.60 872.90 L1383.90 879.20 L1377.60 885.50 Z" fill="url(#gdm)" stroke="#6cc4cc" stroke-width="1"/></g><text x="1387.10" y="886.90" font-family="'DejaVu Sans Condensed','DejaVu Sans',sans-serif" font-size="16.4" font-weight="400" fill="#1d1d1d" style="letter-spacing:0.101px;font-stretch:condensed;">name VARCHAR(45)</text><g filter="url(#sh2)"><path d="M1371.30 912.20 L1377.60 905.90 L1383.90 912.20 L1377.60 918.50 Z" fill="url(#gdm)" stroke="#6cc4cc" stroke-width="1"/></g><text x="1387.10" y="919.90" font-family="'DejaVu Sans Condensed','DejaVu Sans',sans-serif" font-size="16.4" font-weight="400" fill="#1d1d1d" style="letter-spacing:0.135px;font-stretch:condensed;">breed VARCHAR(45)</text><g filter="url(#sh2)"><path d="M1371.30 945.20 L1377.60 938.90 L1383.90 945.20 L1377.60 951.50 Z" fill="url(#gdm)" stroke="#6cc4cc" stroke-width="1"/></g><text x="1388.10" y="952.90" font-family="'DejaVu Sans Condensed','DejaVu Sans',sans-serif" font-size="16.4" font-weight="400" fill="#1d1d1d" style="letter-spacing:0.045px;font-stretch:condensed;">age INT</text><g filter="url(#sh2)"><path d="M1371.30 978.20 L1377.60 971.90 L1383.90 978.20 L1377.60 984.50 Z" fill="url(#gdm)" stroke="#6cc4cc" stroke-width="1"/></g><text x="1388.10" y="985.90" font-family="'DejaVu Sans Condensed','DejaVu Sans',sans-serif" font-size="16.4" font-weight="400" fill="#1d1d1d" style="letter-spacing:-0.042px;font-stretch:condensed;">weight INT</text><g filter="url(#sh2)"><path d="M1371.30 1011.20 L1377.60 1004.90 L1383.90 1011.20 L1377.60 1017.50 Z" fill="url(#gdm)" stroke="#6cc4cc" stroke-width="1"/></g><text x="1387.10" y="1018.90" font-family="'DejaVu Sans Condensed','DejaVu Sans',sans-serif" font-size="16.4" font-weight="400" fill="#1d1d1d" style="letter-spacing:0.059px;font-stretch:condensed;">height INT</text><g filter="url(#sh2)"><path d="M1371.30 1044.20 L1377.60 1037.90 L1383.90 1044.20 L1377.60 1050.50 Z" fill="#fff" stroke="#6cc4cc" stroke-width="1"/></g><text x="1388.10" y="1051.90" font-family="'DejaVu Sans Condensed','DejaVu Sans',sans-serif" font-size="16.4" font-weight="400" fill="#1d1d1d" style="letter-spacing:-0.198px;font-stretch:condensed;">comment LONGTEXT</text><g filter="url(#sh2)"><path d="M1373.10 1072.50 a4.2 4.4 0 1 1 8.4 0 c0 1.9 -0.9 3.2 -2.1 4 l-0.4 4.9 l-1.7 1.5 l-1.7 -1.5 l-0.4 -4.9 c-1.2 -0.8 -2.1 -2.1 -2.1 -4 Z" fill="url(#gkr)"/><ellipse cx="1376.20" cy="1071.20" rx="1.6" ry="1.3" fill="#ffd6cc" opacity=".8"/></g><text x="1388.10" y="1084.90" font-family="'DejaVu Sans Condensed','DejaVu Sans',sans-serif" font-size="16.4" font-weight="400" fill="#1d1d1d" style="letter-spacing:-0.109px;font-stretch:condensed;">customer_id INT</text><text x="1372.50" y="1114.80" font-family="'DejaVu Serif Condensed','DejaVu Serif',serif" font-size="17.2" font-weight="700" fill="#fbfbfb" style="letter-spacing:0.037px;font-stretch:condensed;">Indexes</text><path d="M1524.3 1101.1999999999998 L1536.7 1107.6999999999998 L1524.3 1114.1999999999998 Z" fill="#676767"/><rect x="1357.30" y="788.10" width="12.4" height="12.4" rx="2.2" fill="#fff" stroke="#5c5c5c" stroke-width="2.1"/><rect x="1357.30" y="959.10" width="12.4" height="12.4" rx="2.2" fill="#fff" stroke="#5c5c5c" stroke-width="2.1"/><rect x="1357.30" y="1130.10" width="12.4" height="12.4" rx="2.2" fill="#fff" stroke="#5c5c5c" stroke-width="2.1"/><rect x="1450.10" y="788.10" width="12.4" height="12.4" rx="2.2" fill="#fff" stroke="#5c5c5c" stroke-width="2.1"/><rect x="1450.10" y="1130.10" width="12.4" height="12.4" rx="2.2" fill="#fff" stroke="#5c5c5c" stroke-width="2.1"/><rect x="1541.70" y="788.10" width="12.4" height="12.4" rx="2.2" fill="#fff" stroke="#5c5c5c" stroke-width="2.1"/><rect x="1541.70" y="959.10" width="12.4" height="12.4" rx="2.2" fill="#fff" stroke="#5c5c5c" stroke-width="2.1"/><rect x="1541.70" y="1130.10" width="12.4" height="12.4" rx="2.2" fill="#fff" stroke="#5c5c5c" stroke-width="2.1"/></svg>
</body></html>
